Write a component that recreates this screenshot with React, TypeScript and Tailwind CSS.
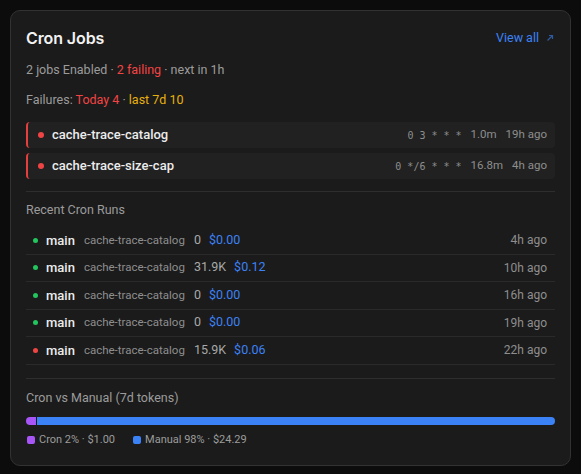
import React from "react";

const failing = [
  { name: "cache-trace-catalog", cron: "0 3 * * *", dur: "1.0m", ago: "19h ago" },
  { name: "cache-trace-size-cap", cron: "0 */6 * * *", dur: "16.8m", ago: "4h ago" },
];

const runs = [
  { ok: true, tokens: "0", cost: "$0.00", ago: "4h ago" },
  { ok: true, tokens: "31.9K", cost: "$0.12", ago: "10h ago" },
  { ok: true, tokens: "0", cost: "$0.00", ago: "16h ago" },
  { ok: true, tokens: "0", cost: "$0.00", ago: "19h ago" },
  { ok: false, tokens: "15.9K", cost: "$0.06", ago: "22h ago" },
];

export default function App() {
  return (
    <div
      className="min-h-[474px] w-[581px] bg-[#0c0c0c] p-[10px]"
      style={{ fontFamily: "Roboto, Inter, 'Noto Sans', sans-serif" }}
    >
      <div className="rounded-[10px] border border-[#323232] bg-[#1b1b1b] px-[15px] pb-[17px] pt-[15px]">
        <div className="flex h-[24px] items-center justify-between">
          <div
            className="text-[16px] font-semibold tracking-[-0.1px] text-[#f2f2f2]"
            style={{ fontFamily: "Inter, Roboto, sans-serif" }}
          >
            Cron Jobs
          </div>
          <div className="mr-[1px] flex items-center gap-[7px] text-[12.5px] text-[#3b82f6]">
            <span>View all</span>
            <svg width="8" height="8" viewBox="0 0 8 8" fill="none" stroke="#2d5aa0" strokeWidth="1.2">
              <path d="M1.5 6.5 L6.5 1.5 M3 1.5 H6.5 V5" />
            </svg>
          </div>
        </div>

        <div className="mt-3 text-[12.5px] leading-4 text-[#9b9b9b]">
          2 jobs Enabled · <span className="text-[#f24444]">2 failing</span> · next in 1h
        </div>

        <div className="mt-[14px] text-[12.5px] leading-4 text-[#9b9b9b]">
          Failures: <span className="text-[#f24444]">Today 4</span> ·{" "}
          <span className="text-[#e8b00c]">last 7d 10</span>
        </div>

        <div className="mt-[14px] flex flex-col gap-[5px]">
          {failing.map((f) => (
            <div
              key={f.name}
              className="flex h-[26px] items-center justify-between rounded-[4px] border-l-2 border-[#e5403e] bg-[#212121] pl-[10px] pr-[8px]"
            >
              <div className="flex items-center gap-[8px]">
                <span className="h-[6px] w-[6px] rounded-full bg-[#ee4444]" />
                <span className="text-[13px] font-medium text-[#ececec]">{f.name}</span>
              </div>
              <div className="flex items-center gap-[9px] text-[11.5px] text-[#8e8e8e]">
                <span className="text-[10px]" style={{ fontFamily: "'DejaVu Sans Mono', monospace", whiteSpace: "pre" }}>
                  {f.cron}
                </span>
                <span>{f.dur}</span>
                <span>{f.ago}</span>
              </div>
            </div>
          ))}
        </div>

        <div className="mt-[12px] border-t border-[#2e2e2e]" />

        <div className="mt-[10px] text-[12.5px] leading-4 text-[#9b9b9b]">Recent Cron Runs</div>

        <div className="mt-[9px] flex flex-col">
          {runs.map((r, i) => (
            <div key={i} className="flex h-[27.5px] items-center justify-between border-b border-[#2a2a2a] pl-[7px]">
              <div className="flex items-center">
                <span className={`h-[5px] w-[5px] rounded-full ${r.ok ? "bg-[#22c55e]" : "bg-[#ef4444]"}`} />
                <span className="ml-[8px] text-[13px] font-medium text-[#ececec]">main</span>
                <span className="ml-[9px] text-[11.5px] text-[#8e8e8e]">cache-trace-catalog</span>
                <span className="ml-[9px] text-[12.5px] text-[#a8a8a8]">{r.tokens}</span>
                <span className="ml-[8px] text-[12.5px] text-[#3b82f6]">{r.cost}</span>
              </div>
              <span className="mr-[8px] text-[12px] text-[#8e8e8e]">{r.ago}</span>
            </div>
          ))}
        </div>

        <div className="mt-[13px] border-t border-[#2e2e2e]" />

        <div className="mt-[11px] text-[12.5px] leading-4 text-[#9b9b9b]">Cron vs Manual (7d tokens)</div>

        <div className="mt-[11px] flex h-2 w-full gap-[1px] overflow-hidden rounded-full">
          <div className="h-full w-[10px] bg-[#a855f7]" />
          <div className="h-full flex-1 bg-[#3b82f6]" />
        </div>

        <div className="mt-[7px] flex items-center gap-[18px] pl-[1px] text-[11px] leading-4 text-[#9b9b9b]">
          <div className="flex items-center gap-[4px]">
            <span className="h-[8px] w-[8px] rounded-[2px] bg-[#a855f7]" />
            <span>Cron 2% · $1.00</span>
          </div>
          <div className="flex items-center gap-[4px]">
            <span className="h-[8px] w-[8px] rounded-[2px] bg-[#3b82f6]" />
            <span>Manual 98% · $24.29</span>
          </div>
        </div>
      </div>
    </div>
  );
}
